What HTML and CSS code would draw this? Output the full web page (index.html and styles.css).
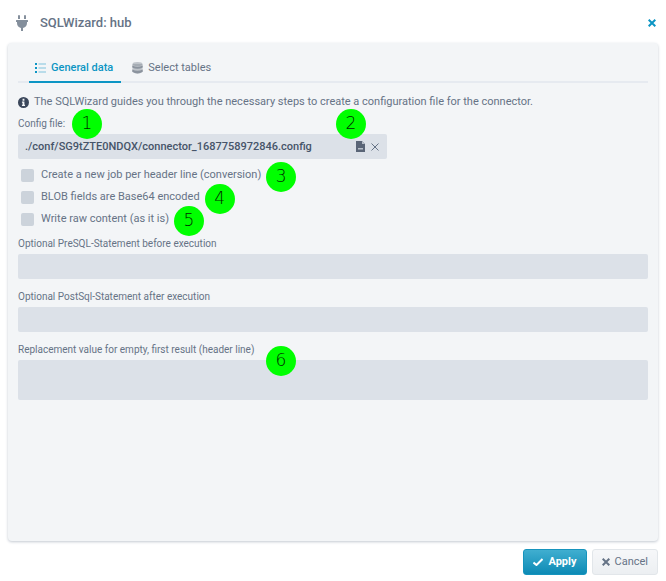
FILE: index.html
```
<!DOCTYPE html>
<html lang="en">
<head>
    <meta charset="UTF-8">
    <meta name="viewport" content="width=device-width, initial-scale=1.0">
    <title>SQLWizard: hub</title>
    <link rel="stylesheet" href="styles.css">
</head>
<body>
    <header class="titlebar">
        <svg class="plug" viewBox="0 0 12 16" width="12" height="16" aria-hidden="true">
            <path d="M3 0a1 1 0 0 1 1 1v3H2V1a1 1 0 0 1 1-1zM9 0a1 1 0 0 1 1 1v3H8V1a1 1 0 0 1 1-1zM.5 5h11a.5.5 0 0 1 .5.5v1a.5.5 0 0 1-.5.5H11v1a5 5 0 0 1-4 4.900V16H5v-3.100A5 5 0 0 1 1 8V7H.5a.5.5 0 0 1-.5-.5v-1A.5.5 0 0 1 .5 5z"/>
        </svg>
        <h1>SQLWizard: hub</h1>
        <button type="button" class="close" aria-label="Close">
            <svg viewBox="0 0 8 8" width="8" height="8"><path d="M.7.7l6.600 6.600M7.300.7L.7 7.300"/></svg>
        </button>
    </header>
    <main class="panel">
        <nav class="tabs" role="tablist">
            <button type="button" class="tab active" role="tab" aria-selected="true">
                <svg viewBox="0 0 11 10" width="11" height="10" aria-hidden="true">
                    <path d="M0 0h2v2H0zM0 4h2v2H0zM0 8h2v2H0z"/>
                    <path class="faded" d="M3.500.5H11v1H3.500zM3.500 4.500H11v1H3.500zM3.500 8.500H11v1H3.500z"/>
                </svg>
                General data
            </button>
            <button type="button" class="tab" role="tab" aria-selected="false">
                <svg class="database" viewBox="0 0 11 12" width="11" height="12" aria-hidden="true">
                    <path class="faded" d="M.5 2v8q5 3 10 0V2z"/>
                    <ellipse class="faded" cx="5.500" cy="2" rx="5" ry="2"/>
                    <path d="M.3 3.600q5.200 2.400 10.400 0v1.900q-5.200 2.400-10.400 0zM.3 7.600q5.200 2.400 10.400 0v2.200q-5.200 3.400-10.400 0z"/>
                </svg>
                Select tables
            </button>
        </nav>
        <form class="settings">
            <p class="info">
                <svg viewBox="0 0 12 12" width="11" height="11" aria-hidden="true">
                    <circle cx="6" cy="6" r="6"/>
                    <path class="cutout" d="M5 2h2v2H5zM4.300 5H7v3.500h.7v1.200H4.300V8.500H5V6.200h-.7z"/>
                </svg>
                The SQLWizard guides you through the necessary steps to create a configuration file for the connector.
            </p>
            <div class="field file">
                <label for="config">Config file:</label>
                <div class="file-box">
                    <input id="config" name="config" value="./conf/SG9tZTE0NDQX/connector_1687758972846.config">
                    <button type="button" aria-label="Choose file">
                        <svg viewBox="0 0 9 11" width="9" height="11">
                            <path class="sheet" d="M0 0h6l3 3v8H0z"/>
                            <path class="fold" d="M6 0l3 3H6z"/>
                            <path class="strip" d="M2 7h5v1.500H2z"/>
                        </svg>
                    </button>
                    <button type="button" aria-label="Clear file">
                        <svg viewBox="0 0 8 8" width="8" height="8"><path class="cross" d="M.5.5l7 7M7.500.5l-7 7"/></svg>
                    </button>
                </div>
                <span class="marker marker-label">1</span>
                <span class="marker marker-file">2</span>
            </div>
            <div class="checks">
                <label><input type="checkbox" name="headerJob">Create a new job per header line (conversion)<span class="marker">3</span></label>
                <label><input type="checkbox" name="base64">BLOB fields are Base64 encoded<span class="marker">4</span></label>
                <label><input type="checkbox" name="raw">Write raw content (as it is)<span class="marker">5</span></label>
            </div>
            <div class="field">
                <label for="preSql">Optional PreSQL-Statement before execution</label>
                <input id="preSql" name="preSql">
            </div>
            <div class="field">
                <label for="postSql">Optional PostSql-Statement after execution</label>
                <input id="postSql" name="postSql">
            </div>
            <div class="field">
                <label for="replacement">Replacement value for empty, first result (header line)</label>
                <textarea id="replacement" name="replacement"></textarea>
                <span class="marker marker-area">6</span>
            </div>
        </form>
    </main>
    <footer class="actions">
        <button type="button" class="btn primary">
            <svg viewBox="0 0 10 8" width="10" height="8" aria-hidden="true"><path d="M.5 4.500L3.500 7l6-6"/></svg>
            Apply
        </button>
        <button type="button" class="btn">
            <svg viewBox="0 0 8 8" width="8" height="8" aria-hidden="true"><path d="M.7.7l6.600 6.600M7.300.7L.7 7.300"/></svg>
            Cancel
        </button>
    </footer>
</body>
</html>
```
FILE: styles.css
```
* {
    box-sizing: border-box;
}
body {
    display: flex;
    flex-flow: column;
    min-height: 100vh;
    margin: 0;
    padding: 0 8px 6px;
    background-color: #fff;
    color: #667386;
    font: 11px/16px Roboto, "Liberation Sans", sans-serif;
}
button,
input,
textarea {
    font: inherit;
    color: inherit;
}
button {
    margin: 0;
    padding: 0;
    border: 0;
    background: none;
}
svg {
    flex: none;
    fill: currentColor;
}
.titlebar {
    display: flex;
    align-items: center;
    gap: 12px;
    height: 43px;
    padding: 3px 2px 0 8px;
}
.titlebar h1 {
    flex: 1;
    margin: 0;
    font-size: 13px;
    font-weight: 500;
}
.plug {
    color: #848f9c;
}
.close {
    display: flex;
    color: #0c95c4;
}
.close path,
.btn path,
.cross {
    fill: none;
    stroke: currentColor;
    stroke-width: 2;
}
.panel {
    flex: 1;
    padding: 10px;
    border-radius: 4px;
    background-color: #f3f5f7;
    box-shadow: 0 1px 3px #c3c9d1;
}
.tabs {
    display: flex;
    height: 30px;
    padding-left: 11px;
    border-bottom: 2px solid #e6eaf0;
}
.tab {
    display: flex;
    align-items: center;
    gap: 5px;
    height: 30px;
    padding: 2px 8px 0 6px;
    border-bottom: 2px solid transparent;
}
.tab + .tab {
    margin-left: 5px;
}
.tab.active {
    border-color: #0c95c4;
    color: #0c95c4;
    font-weight: 500;
}
.faded {
    opacity: 0.5;
}
.database {
    color: #8b939e;
}
.info {
    display: flex;
    align-items: center;
    gap: 5px;
    margin: 11px 0 6px;
}
.info svg {
    color: #3a465a;
}
.cutout {
    fill: #f3f5f7;
}
.field {
    position: relative;
    display: flex;
    flex-flow: column;
    gap: 2px;
    margin-bottom: 10px;
}
.field > label {
    font-size: 10px;
}
.field > input,
.field > textarea,
.file-box {
    height: 25px;
    padding: 0 8px 0 7px;
    border: 0;
    border-radius: 2px;
    background-color: #dce1e8;
}
.field > textarea {
    height: 40px;
    resize: none;
}
.file {
    max-width: 369px;
    margin-bottom: 4px;
}
.file-box {
    display: flex;
    align-items: center;
    gap: 6px;
}
.file-box input {
    flex: 1;
    min-width: 0;
    padding: 0;
    border: 0;
    background: none;
    color: #465469;
    font-weight: 500;
}
.file-box button {
    display: flex;
}
.file-box .cross {
    stroke-width: 1;
}
.sheet {
    fill: #5a6577;
}
.fold,
.strip {
    fill: #b8c0ca;
}
.checks {
    display: flex;
    flex-flow: column;
    align-items: flex-start;
    gap: 6px;
    margin: 8px 0 9px 3px;
}
.checks label {
    position: relative;
    display: flex;
    align-items: center;
    gap: 7px;
}
.checks input {
    appearance: none;
    width: 13px;
    height: 13px;
    margin: 0;
    border-radius: 2px;
    background-color: #ccd3db;
}
/* numbered callouts */
.marker {
    position: absolute;
    z-index: 1;
    width: 30px;
    height: 30px;
    border-radius: 50%;
    background-color: #0f0;
    color: #002800;
    font: 200 17px/29px "DejaVu Sans", sans-serif;
    text-align: center;
}
.checks .marker {
    top: -5px;
    left: 100%;
    margin-left: 5px;
}
.marker-label {
    top: -7px;
    left: 54px;
}
.marker-file {
    top: -7px;
    right: 21px;
}
.marker-area {
    top: 4px;
    left: 248px;
}
.actions {
    display: flex;
    justify-content: flex-end;
    gap: 5px;
    margin-top: 8px;
}
.btn {
    display: flex;
    align-items: center;
    gap: 5px;
    height: 26px;
    padding: 0 9px;
    border: 1px solid #e2e6ea;
    border-radius: 3px;
    background: linear-gradient(#f6f7f9, #eceff2);
}
.btn.primary {
    border-color: #1694bd;
    background: linear-gradient(#40aed0, #0d8ab5);
    color: #fff;
    font-weight: 700;
}
```
